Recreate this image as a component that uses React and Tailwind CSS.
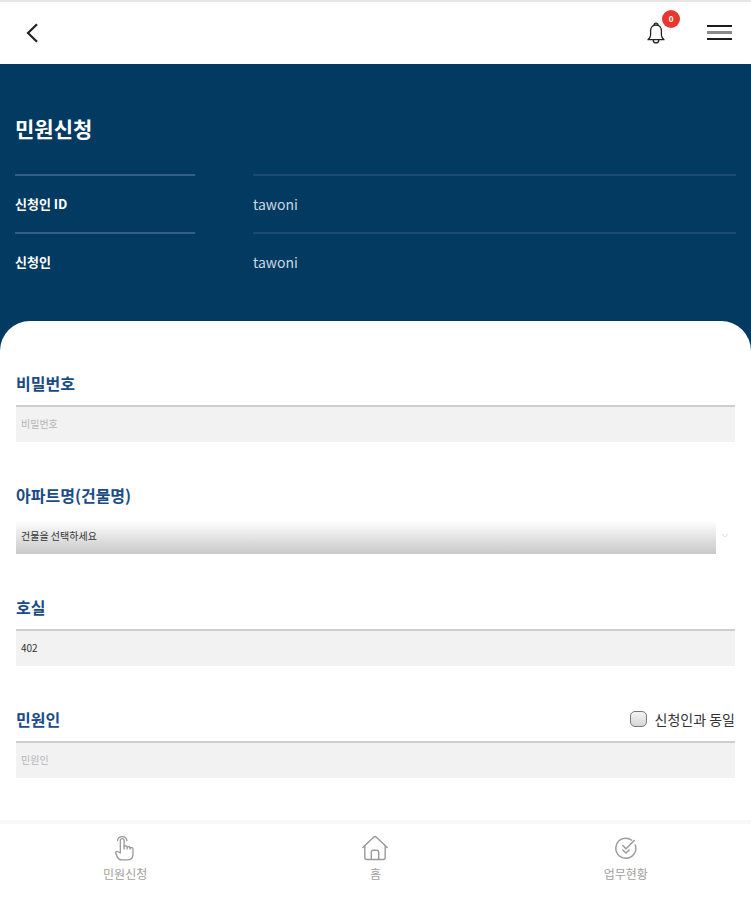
import { useState } from 'react'

const APPLICANT = [
  { label: '신청인 ID', value: 'tawoni' },
  { label: '신청인', value: 'tawoni' },
]

const INPUT_CLASS =
  'block w-full h-[37px] px-[5px] pb-[2px] rounded-none border-0 border-t-2 border-[#cfcfcf] bg-[#f2f2f2] text-[10px] text-[#333] placeholder:text-[#b4b4b4] outline-none'

function BellIcon() {
  return (
    <svg width="18" height="22" viewBox="0 0 18 22" fill="none" stroke="#222" strokeWidth="1.3" strokeLinecap="round" strokeLinejoin="round">
      <path d="M7 3.200a2 2 0 1 1 4 0" />
      <path d="M9 3C5.600 3 3.600 5.400 3.600 8.600v4.400c0 1.600-.8 3-2.600 4.700h16c-1.800-1.700-2.600-3.100-2.600-4.700V8.600C14.400 5.400 12.400 3 9 3z" />
      <path d="M6.200 17.900a2.800 3 0 0 0 5.600 0" />
    </svg>
  )
}

function TouchIcon() {
  return (
    <svg width="26" height="28" viewBox="0 0 26 28" fill="none" stroke="#999" strokeWidth="1.300" strokeLinecap="round" strokeLinejoin="round">
      <path d="M5.500 6.500a4.800 4.800 0 0 1 9.400 0" />
      <path d="M8.300 18.500V6.500a1.900 1.900 0 0 1 3.800 0v8.500" />
      <path d="M12.100 12.500c.6-1 3-.8 3 .6v1.900M15.100 13.300c.6-1 3-.7 3 .6v1.300M18.100 14c.8-.9 2.900-.4 2.900 1.200V20c0 3.500-1.700 5.800-5.200 5.800H9.500c-2 0-3.300-1-4.100-2.700l-1.600-3.600c-.6-1.400.9-2.600 2.200-1.800l2.300 1.300" />
    </svg>
  )
}

function HomeIcon() {
  return (
    <svg width="28" height="28" viewBox="0 0 28 28" fill="none" stroke="#999" strokeWidth="1.400" strokeLinecap="round" strokeLinejoin="round">
      <path d="M1.800 13.500 12.600 3.200a2 2 0 0 1 2.800 0l10.800 10.300" />
      <path d="M3.800 11.800V23.500a2 2 0 0 0 2 2h16.400a2 2 0 0 0 2-2V11.800" />
      <path d="M10.300 25.300v-7a2 2 0 0 1 2-2h3.400a2 2 0 0 1 2 2v7" />
    </svg>
  )
}

function StatusIcon() {
  return (
    <svg width="26" height="28" viewBox="0 0 26 28" fill="none" stroke="#999" strokeWidth="1.400" strokeLinecap="round" strokeLinejoin="round">
      <path d="M18.800 6.200A10 10 0 1 0 22.300 11" />
      <path d="m9.800 11.500 3.200 3.200 8.300-8.300" />
      <path d="m9.800 16 3.200 3 3.200-3" />
    </svg>
  )
}

const TABS = [
  { label: '민원신청', icon: TouchIcon },
  { label: '홈', icon: HomeIcon },
  { label: '업무현황', icon: StatusIcon },
]

function Header() {
  return (
    <header className="flex h-16 items-center justify-between border-t-2 border-[#e6e6e6] bg-white pl-5 pr-[19px]">
      <button type="button" aria-label="뒤로" className="p-1">
        <svg width="16" height="20" viewBox="0 0 16 20" fill="none" stroke="#222" strokeWidth="2.200">
          <path d="M13 1.300 4 10l9 8.700" />
        </svg>
      </button>
      <div className="flex items-center gap-[42px]">
        <button type="button" aria-label="알림" className="relative">
          <BellIcon />
          <span className="absolute -top-3 left-[15px] flex size-[18px] items-center justify-center rounded-full bg-[#e8372f] text-[8px] font-bold text-white">
            0
          </span>
        </button>
        <button type="button" aria-label="메뉴">
          <svg width="25" height="16" viewBox="0 0 25 16">
            <path d="M0 1h25M0 14h25" stroke="#1c1c1c" strokeWidth="2" />
            <path d="M0 7.500h25" stroke="#8a8a8a" strokeWidth="3" />
          </svg>
        </button>
      </div>
    </header>
  )
}

function Field({ id, label, extra, children }) {
  return (
    <div>
      <div className="mb-[10px] flex items-center justify-between leading-6">
        <label htmlFor={id} className="text-base font-bold text-[#1b4b86]">{label}</label>
        {extra}
      </div>
      {children}
    </div>
  )
}

export default function App() {
  const [password, setPassword] = useState('')
  const [room, setRoom] = useState('402')
  const [name, setName] = useState('')
  const [same, setSame] = useState(false)

  const toggleSame = (e) => {
    setSame(e.target.checked)
    setName(e.target.checked ? 'tawoni' : '')
  }

  return (
    <div className="flex min-h-screen flex-col bg-white font-['Noto_Sans_CJK_KR','Noto_Sans',sans-serif]">
      <Header />

      <main className="flex grow flex-col bg-[#023a61]">
        <section className="px-[15px] pt-12 pb-[31px] text-white">
          <h1 className="mb-[30px] text-[21px] leading-8 font-bold">민원신청</h1>
          <dl>
            {APPLICANT.map((row) => (
              <div key={row.label} className="grid grid-cols-[25%_67%] justify-between text-[13px] leading-14">
                <dt className="border-t-2 border-[#355f85] font-bold">{row.label}</dt>
                <dd className="border-t-2 border-[#1a4a70] text-sm leading-14 text-[#ccd8e2]">{row.value}</dd>
              </div>
            ))}
          </dl>
        </section>

        {/* Form */}
        <form className="flex grow flex-col gap-[41px] rounded-t-[30px] bg-white px-4 pt-[50px] pb-10">
          <Field id="password" label="비밀번호">
            <input
              id="password"
              type="password"
              placeholder="비밀번호"
              value={password}
              onChange={(e) => setPassword(e.target.value)}
              className={INPUT_CLASS}
            />
          </Field>

          <Field id="building" label="아파트명(건물명)">
            <div className="flex items-center">
              <select
                id="building"
                className="h-[37px] grow appearance-none rounded-none bg-linear-to-b from-white from-10% to-[#c8c8c8] px-[5px] text-[10px] text-[#333] outline-none"
              >
                <option>건물을 선택하세요</option>
              </select>
              <svg width="19" height="8" viewBox="0 0 19 8" fill="none" stroke="#ddd">
                <path d="m6 2 3 3 3-3" />
              </svg>
            </div>
          </Field>

          <Field id="room" label="호실">
            <input id="room" type="text" value={room} onChange={(e) => setRoom(e.target.value)} className={INPUT_CLASS} />
          </Field>

          <Field
            id="name"
            label="민원인"
            extra={
              <label className="flex items-center gap-2 text-sm leading-6 text-[#333]">
                <input
                  type="checkbox"
                  checked={same}
                  onChange={toggleSame}
                  className="h-4 w-[17px] appearance-none rounded-[5px] border border-[#777] bg-linear-to-b from-[#f4f4f4] to-[#d6d6d6] checked:to-[#1c4a80]"
                />
                신청인과 동일
              </label>
            }
          >
            <input
              id="name"
              type="text"
              placeholder="민원인"
              value={name}
              onChange={(e) => setName(e.target.value)}
              className={INPUT_CLASS}
            />
          </Field>
        </form>
      </main>

      {/* Bottom tabs */}
      <nav className="sticky bottom-0 grid h-20 grid-cols-3 border-t-4 border-[#f8f8f8] bg-white">
        {TABS.map(({ label, icon: Icon }) => (
          <a key={label} href="#" className="flex flex-col items-center pt-[10px] text-xs leading-6 text-[#a0a0a0]">
            <Icon />
            {label}
          </a>
        ))}
      </nav>
    </div>
  )
}
